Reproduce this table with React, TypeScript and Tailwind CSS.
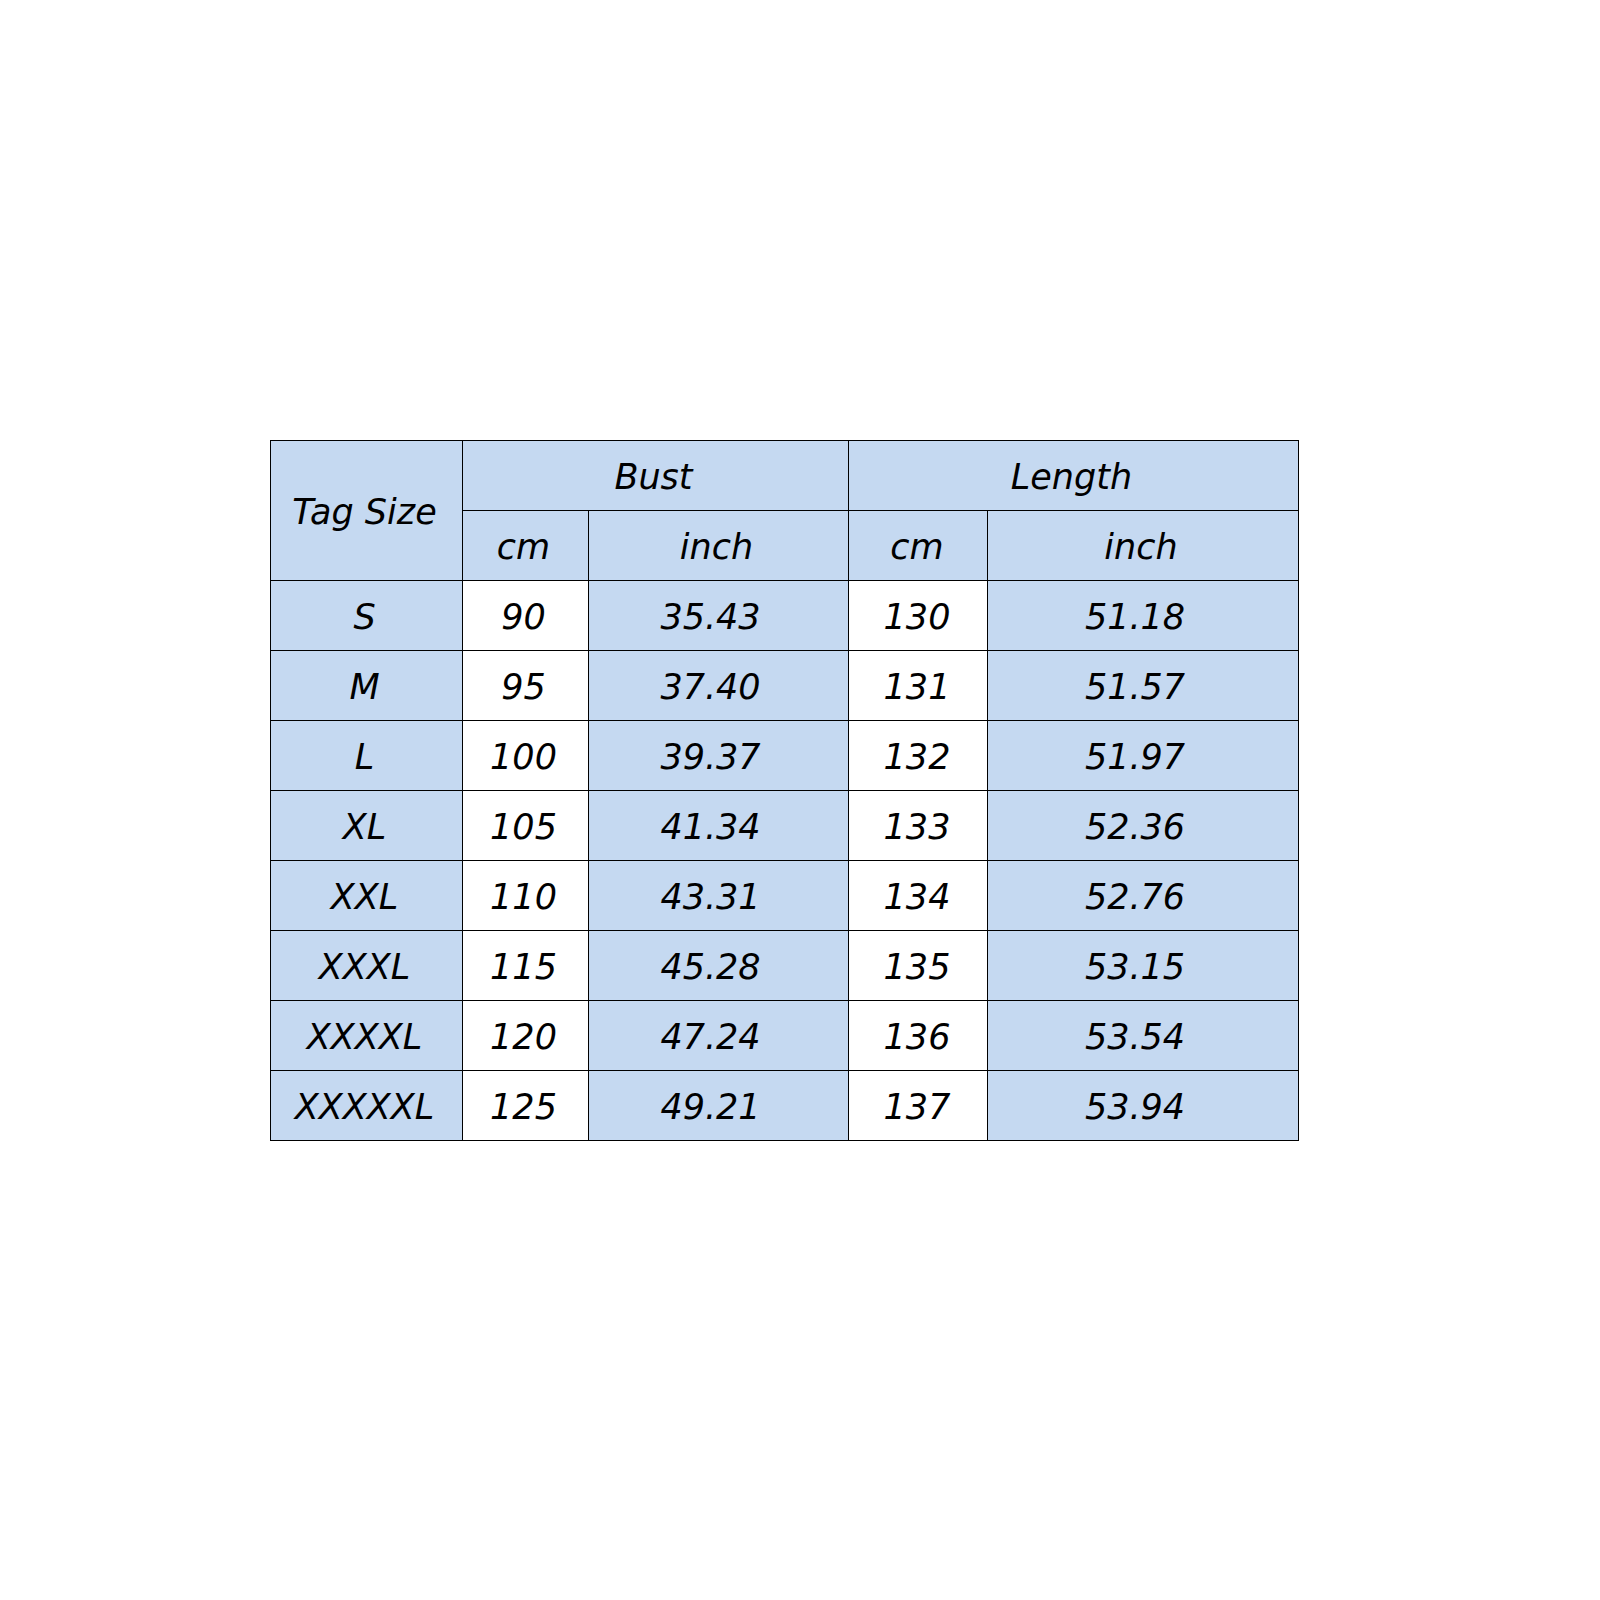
import React from 'react';

const rows = [
  ['S', '90', '35.43', '130', '51.18'],
  ['M', '95', '37.40', '131', '51.57'],
  ['L', '100', '39.37', '132', '51.97'],
  ['XL', '105', '41.34', '133', '52.36'],
  ['XXL', '110', '43.31', '134', '52.76'],
  ['XXXL', '115', '45.28', '135', '53.15'],
  ['XXXXL', '120', '47.24', '136', '53.54'],
  ['XXXXXL', '125', '49.21', '137', '53.94'],
];

const cell = 'border border-black h-[70px] p-0 pt-[3px] text-center align-middle font-normal';

export default function App() {
  return (
    <div className="w-[1600px] h-[1600px] bg-white pt-[440px] pl-[270px]">
      <table
        className="border-collapse table-fixed italic text-[35px] text-black [font-family:'DejaVu_Sans',Verdana,sans-serif]"
        style={{ width: 1028 }}
      >
        <colgroup>
          <col className="w-[192px]" />
          <col className="w-[126px]" />
          <col className="w-[260px]" />
          <col className="w-[139px]" />
          <col className="w-[311px]" />
        </colgroup>
        <thead>
          <tr>
            <th rowSpan={2} className={`${cell} bg-[#c5d9f1] pr-[4px]`}>Tag Size</th>
            <th colSpan={2} className={`${cell} bg-[#c5d9f1] pr-[4px]`}>Bust</th>
            <th colSpan={2} className={`${cell} bg-[#c5d9f1] pr-[4px]`}>Length</th>
          </tr>
          <tr>
            <th className={`${cell} bg-[#c5d9f1] pr-[4px]`}>cm</th>
            <th className={`${cell} bg-[#c5d9f1] pr-[4px]`}>inch</th>
            <th className={`${cell} bg-[#c5d9f1] pr-[2px]`}>cm</th>
            <th className={`${cell} bg-[#c5d9f1] pr-[4px]`}>inch</th>
          </tr>
        </thead>
        <tbody>
          {rows.map(r => (
            <tr key={r[0]}>
              <td className={`${cell} bg-[#c5d9f1] pr-[4px]`}>{r[0]}</td>
              <td className={`${cell} bg-white pr-[4px]`}>{r[1]}</td>
              <td className={`${cell} bg-[#c5d9f1] pr-[16px]`}>{r[2]}</td>
              <td className={`${cell} bg-white pr-[2px]`}>{r[3]}</td>
              <td className={`${cell} bg-[#c5d9f1] pr-[16px]`}>{r[4]}</td>
            </tr>
          ))}
        </tbody>
      </table>
    </div>
  );
}
